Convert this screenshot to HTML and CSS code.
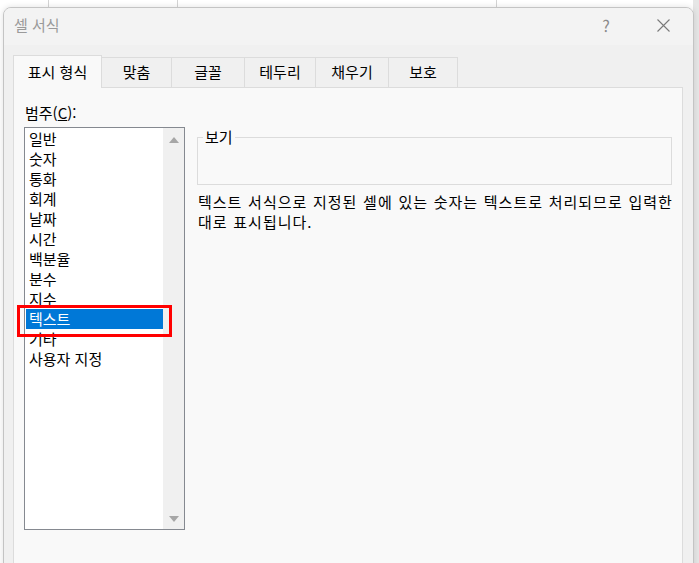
FILE: index.html
```html
<!DOCTYPE html>
<html lang="ko">
<head>
<meta charset="utf-8">
<title>셀 서식</title>
<link rel="stylesheet" href="styles.css">
</head>
<body>
<div class="desk">
  <div class="dialog">
    <div class="titlebar">
      <span class="title">셀 서식</span>
      <span class="help">?</span>
      <span class="close">
        <svg width="13" height="13" viewBox="0 0 13 13"><path d="M0.5 0.5 L12.5 12.5 M12.5 0.5 L0.5 12.5" stroke="#7a7a7a" stroke-width="1.1" fill="none"/></svg>
      </span>
    </div>
    <div class="content">
      <div class="tabs">
        <div class="tab active w1">표시 형식</div>
        <div class="tab w2">맞춤</div>
        <div class="tab w3">글꼴</div>
        <div class="tab w4">테두리</div>
        <div class="tab w5">채우기</div>
        <div class="tab w6">보호</div>
      </div>
      <div class="panel">
        <div class="left">
          <div class="label">범주(<u>C</u>):</div>
          <div class="listbox">
            <ul class="items">
              <li>일반</li>
              <li>숫자</li>
              <li>통화</li>
              <li>회계</li>
              <li>날짜</li>
              <li>시간</li>
              <li>백분율</li>
              <li>분수</li>
              <li>지수</li>
              <li class="selected">텍스트</li>
              <li>기타</li>
              <li>사용자 지정</li>
            </ul>
            <div class="scrollbar">
              <span class="arrow up"></span>
              <span class="arrow down"></span>
            </div>
            <div class="mark"></div>
          </div>
        </div>
        <div class="right">
          <fieldset class="preview">
            <legend>보기</legend>
          </fieldset>
          <p class="desc">텍스트 서식으로 지정된 셀에 있는 숫자는 텍스트로 처리되므로 입력한 대로 표시됩니다.</p>
        </div>
      </div>
    </div>
  </div>
</div>
</body>
</html>
```

FILE: styles.css
```css
* { box-sizing: border-box; }
html, body { margin: 0; padding: 0; }
body {
  width: 699px;
  height: 563px;
  overflow: hidden;
  font-family: "Noto Sans CJK KR", "Noto Sans", sans-serif;
  color: #000;
}
.desk {
  width: 699px;
  height: 563px;
  overflow: hidden;
  background-color: #ffffff;
  background-image:
    linear-gradient(#d4d4d4, #d4d4d4),
    linear-gradient(#d4d4d4, #d4d4d4),
    linear-gradient(#d4d4d4, #d4d4d4),
    linear-gradient(#e6e6e6, #e6e6e6);
  background-size: 1px 8px, 1px 8px, 1px 8px, 8px 563px;
  background-position: 48px 0, 177px 0, 496px 0, 693px 0;
  background-repeat: no-repeat;
  padding: 7px 0 0 3px;
}
.dialog {
  width: 691px;
  height: 580px;
  background: #f0f0f0;
  border: 1px solid #c4c4c4;
  border-radius: 8px 8px 0 0;
  box-shadow: 0 0 6px rgba(0,0,0,0.12);
  overflow: hidden;
}
.titlebar {
  height: 37px;
  background: #f3f3f3;
  display: flex;
  align-items: center;
  padding: 0 0 3px 10px;
}
.title {
  font-size: 15px;
  color: #9a9a9a;
  flex: 1;
  line-height: 20px;
}
.help {
  font-size: 16px;
  color: #8a8a8a;
  width: 20px;
  text-align: center;
  margin-right: 41px;
  line-height: 20px;
}
.close {
  width: 13px;
  height: 13px;
  display: flex;
  margin-right: 23px;
}
.content {
  padding: 10px 9px 0 9px;
}
.tabs {
  display: flex;
  align-items: flex-end;
  height: 33px;
  position: relative;
  z-index: 1;
}
.tab {
  height: 30px;
  margin-bottom: 1px;
  border: 1px solid #dcdcdc;
  border-bottom: none;
  border-left: none;
  background: #f0f0f0;
  font-size: 15px;
  line-height: 28px;
  text-align: center;
}
.tab.active {
  height: 33px;
  margin-bottom: 0;
  background: #f9f9f9;
  border-left: 1px solid #dcdcdc;
  line-height: 32px;
}
.w1 { width: 89px; }
.w2 { width: 70px; }
.w3 { width: 73px; }
.w4 { width: 71px; }
.w5 { width: 73px; }
.w6 { width: 69px; }
.panel {
  margin-top: -1px;
  width: 670px;
  height: 490px;
  background: #f9f9f9;
  border: 1px solid #dcdcdc;
  display: flex;
  padding: 15px 10px 0 10px;
  gap: 12px;
}
.left {
  width: 161px;
}
.label {
  font-size: 15px;
  line-height: 20px;
  padding-left: 1px;
  margin-bottom: 4px;
}
.listbox {
  position: relative;
  width: 161px;
  height: 403px;
  border: 1px solid #858990;
  background: #ffffff;
  display: flex;
}
.items {
  list-style: none;
  margin: 0;
  padding: 1px 0 0 1px;
  flex: 1;
}
.items li {
  height: 20px;
  line-height: 20px;
  font-size: 15px;
  padding-left: 3px;
  white-space: nowrap;
}
.items li.selected {
  background: #0078d7;
  color: #ffffff;
}
.scrollbar {
  width: 21px;
  background: #f0f0f0;
  position: relative;
  display: flex;
  flex-direction: column;
  justify-content: space-between;
  align-items: center;
  padding: 9px 0 7px;
}
.arrow {
  width: 0;
  height: 0;
  border-left: 5px solid transparent;
  border-right: 5px solid transparent;
}
.arrow.up { border-bottom: 6px solid #a6a6a6; }
.arrow.down { border-top: 6px solid #a6a6a6; }
.mark {
  position: absolute;
  left: -8px;
  top: 177px;
  width: 155px;
  height: 32px;
  border: 3px solid #ff0000;
}
.right {
  width: 475px;
  padding-top: 26px;
}
.preview {
  margin: 0;
  padding: 0;
  height: 56px;
  border: 1px solid #dcdcdc;
}
.preview legend {
  font-size: 15px;
  line-height: 16px;
  padding: 0 2px;
  margin-left: 5px;
}
.desc {
  margin: 7px 0 0 1px;
  font-size: 15px;
  line-height: 20px;
  width: 480px;
  letter-spacing: 1px;
  word-spacing: 0.5px;
}
```
